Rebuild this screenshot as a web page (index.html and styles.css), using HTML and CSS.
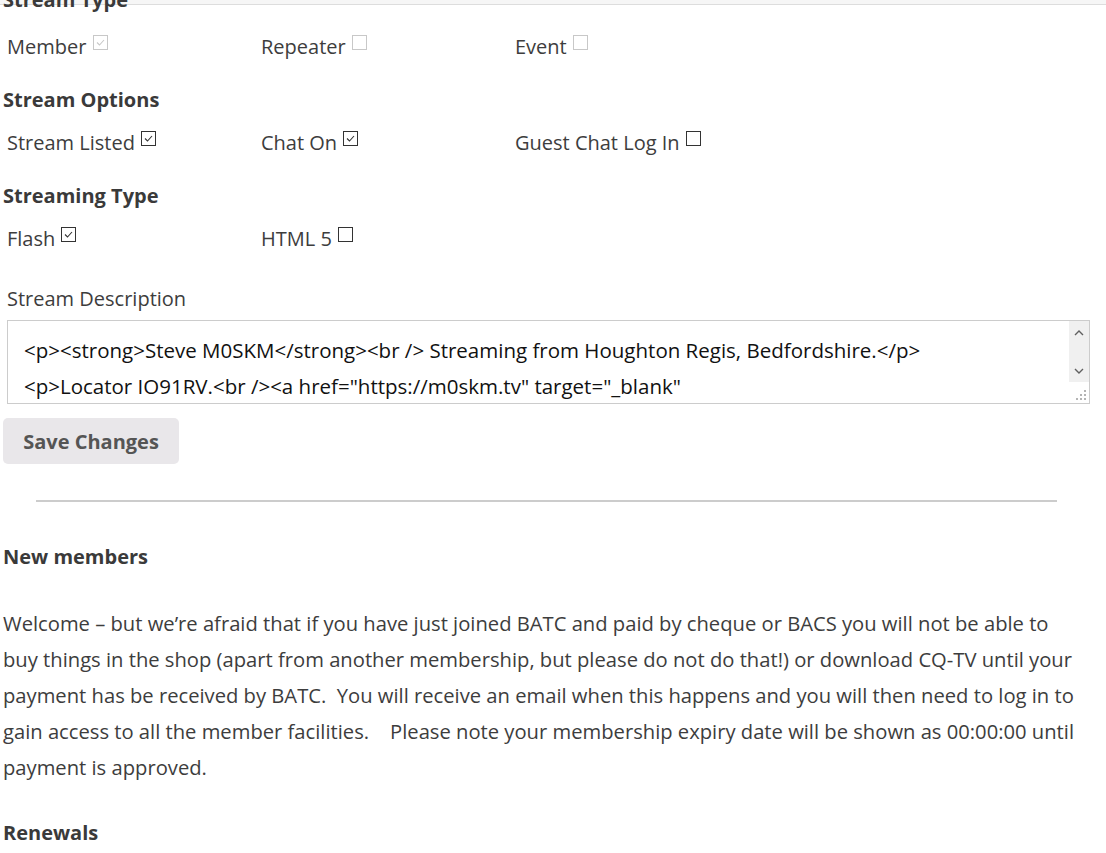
FILE: index.html
```html
<!DOCTYPE html>
<html lang="en">
<head>
    <meta charset="UTF-8">
    <meta name="viewport" content="width=device-width, initial-scale=1.0">
    <title>BATC - My Stream</title>
    <link rel="stylesheet" href="styles.css">
</head>
<body>
    <div class="topbar"></div>

    <form class="stream-form">
        <h3 class="section-title first">Stream Type</h3>
        <div class="option-row">
            <label class="option">Member <span class="box disabled checked"><svg viewBox="0 0 13 13"><path d="M3 6.5l2.5 2.5 4.5-5"/></svg></span></label>
            <label class="option">Repeater <span class="box disabled"></span></label>
            <label class="option">Event <span class="box disabled"></span></label>
        </div>

        <h3 class="section-title">Stream Options</h3>
        <div class="option-row">
            <label class="option">Stream Listed <span class="box checked"><svg viewBox="0 0 13 13"><path d="M3 6.5l2.5 2.5 4.5-5"/></svg></span></label>
            <label class="option">Chat On <span class="box checked"><svg viewBox="0 0 13 13"><path d="M3 6.5l2.5 2.5 4.5-5"/></svg></span></label>
            <label class="option">Guest Chat Log In <span class="box"></span></label>
        </div>

        <h3 class="section-title">Streaming Type</h3>
        <div class="option-row">
            <label class="option">Flash <span class="box checked"><svg viewBox="0 0 13 13"><path d="M3 6.5l2.5 2.5 4.5-5"/></svg></span></label>
            <label class="option">HTML 5 <span class="box"></span></label>
        </div>

        <label class="field-label" for="description">Stream Description</label>
        <div class="description-wrap">
            <textarea id="description" class="description" rows="2">&lt;p&gt;&lt;strong&gt;Steve M0SKM&lt;/strong&gt;&lt;br /&gt; Streaming from Houghton Regis, Bedfordshire.&lt;/p&gt;
&lt;p&gt;Locator IO91RV.&lt;br /&gt;&lt;a href="https://m0skm.tv" target="_blank"
rel="noopener"&gt;https://m0skm.tv&lt;/a&gt;&lt;/p&gt;</textarea>
            <div class="scroll-side">
                <div class="scroll-track">
                    <svg class="arrow" viewBox="0 0 10 6"><path d="M1 5l4-4 4 4"/></svg>
                    <svg class="arrow" viewBox="0 0 10 6"><path d="M1 1l4 4 4-4"/></svg>
                </div>
                <svg class="grip" viewBox="0 0 12 12">
                    <rect x="9" y="1" width="2" height="2"/>
                    <rect x="5" y="5" width="2" height="2"/>
                    <rect x="9" y="5" width="2" height="2"/>
                    <rect x="1" y="9" width="2" height="2"/>
                    <rect x="5" y="9" width="2" height="2"/>
                    <rect x="9" y="9" width="2" height="2"/>
                </svg>
            </div>
        </div>

        <button type="button" class="save-btn">Save Changes</button>
    </form>

    <hr class="divider">

    <div class="notes">
        <h3 class="section-title">New members</h3>
        <p>Welcome – but we’re afraid that if you have just joined BATC and paid by cheque or BACS you will not be able to buy things in the shop (apart from another membership, but please do not do that!) or download CQ-TV until your payment has be received by BATC.&nbsp; You will receive an email when this happens and you will then need to log in to gain access to all the member facilities.&nbsp;&nbsp;&nbsp; Please note your membership expiry date will be shown as 00:00:00 until payment is approved.</p>
        <h3 class="section-title">Renewals</h3>
    </div>
</body>
</html>
```

FILE: styles.css
```css
body {
    margin: 0;
    padding: 0 22px 0 3px;
    font-family: "Open Sans", "Noto Sans", sans-serif;
    font-size: 20px;
    color: #3d3d3d;
    background-color: #fff;
    overflow: hidden;
}

.topbar {
    height: 4px;
    margin: 0 -22px 0 -3px;
    background-color: #f6f6f6;
    border-bottom: 1px solid #ddd;
}

.section-title {
    margin: 0;
    font-size: 20px;
    font-weight: bold;
    line-height: 26px;
    color: #3a3a3a;
}

.section-title.first {
    margin-top: -18px;
}

.option-row {
    display: grid;
    grid-template-columns: 254px 254px 254px;
    padding-left: 4px;
    margin: 17px 0 27px;
    line-height: 26px;
}

.section-title.first + .option-row {
    margin-top: 21px;
}

.option {
    white-space: nowrap;
}

.box {
    display: inline-block;
    box-sizing: border-box;
    width: 15px;
    height: 15px;
    margin: 1px 0 0 1px;
    vertical-align: top;
    border: 1px solid #333;
    background-color: #fff;
}

.box svg {
    display: block;
    width: 13px;
    height: 13px;
    fill: none;
    stroke: #333;
    stroke-width: 1.1;
}

.box.disabled {
    border-color: #c8c8c8;
}

.box.disabled svg {
    stroke: #c8c8c8;
}

.field-label {
    display: block;
    margin: 34px 0 8px 4px;
    line-height: 26px;
}

.description-wrap {
    display: flex;
    height: 84px;
    width: 1083px;
    margin-left: 4px;
    box-sizing: border-box;
    border: 1px solid #ccc;
    background-color: #fff;
}

.description {
    flex: 1;
    box-sizing: border-box;
    height: 82px;
    padding: 11px 16px;
    border: none;
    outline: none;
    font-family: inherit;
    font-size: 20.5px;
    line-height: 36px;
    color: #111;
    overflow: hidden;
    resize: none;
}

.scroll-side {
    display: flex;
    flex-direction: column;
    align-items: flex-end;
    width: 20px;
}

.scroll-track {
    display: flex;
    flex-direction: column;
    justify-content: space-between;
    align-items: center;
    box-sizing: border-box;
    width: 20px;
    height: 61px;
    padding: 9px 0 8px;
    background-color: #f0f0f0;
}

.arrow {
    width: 10px;
    height: 6px;
    fill: none;
    stroke: #606060;
    stroke-width: 1.4;
}

.grip {
    width: 12px;
    height: 12px;
    margin: 7px 2px 0 0;
    fill: #b4b4b4;
}

.save-btn {
    display: block;
    margin-top: 14px;
    width: 176px;
    height: 46px;
    border: none;
    border-radius: 5px;
    background-color: #e9e7ea;
    font-family: inherit;
    font-size: 20px;
    font-weight: bold;
    color: #555;
}

.divider {
    margin: 36px 27px 0 33px;
    border: none;
    border-top: 2px solid #ccc;
}

.notes {
    padding-top: 42px;
}

.notes p {
    margin: 35px 0;
    font-size: 20.2px;
    line-height: 36px;
}
```
